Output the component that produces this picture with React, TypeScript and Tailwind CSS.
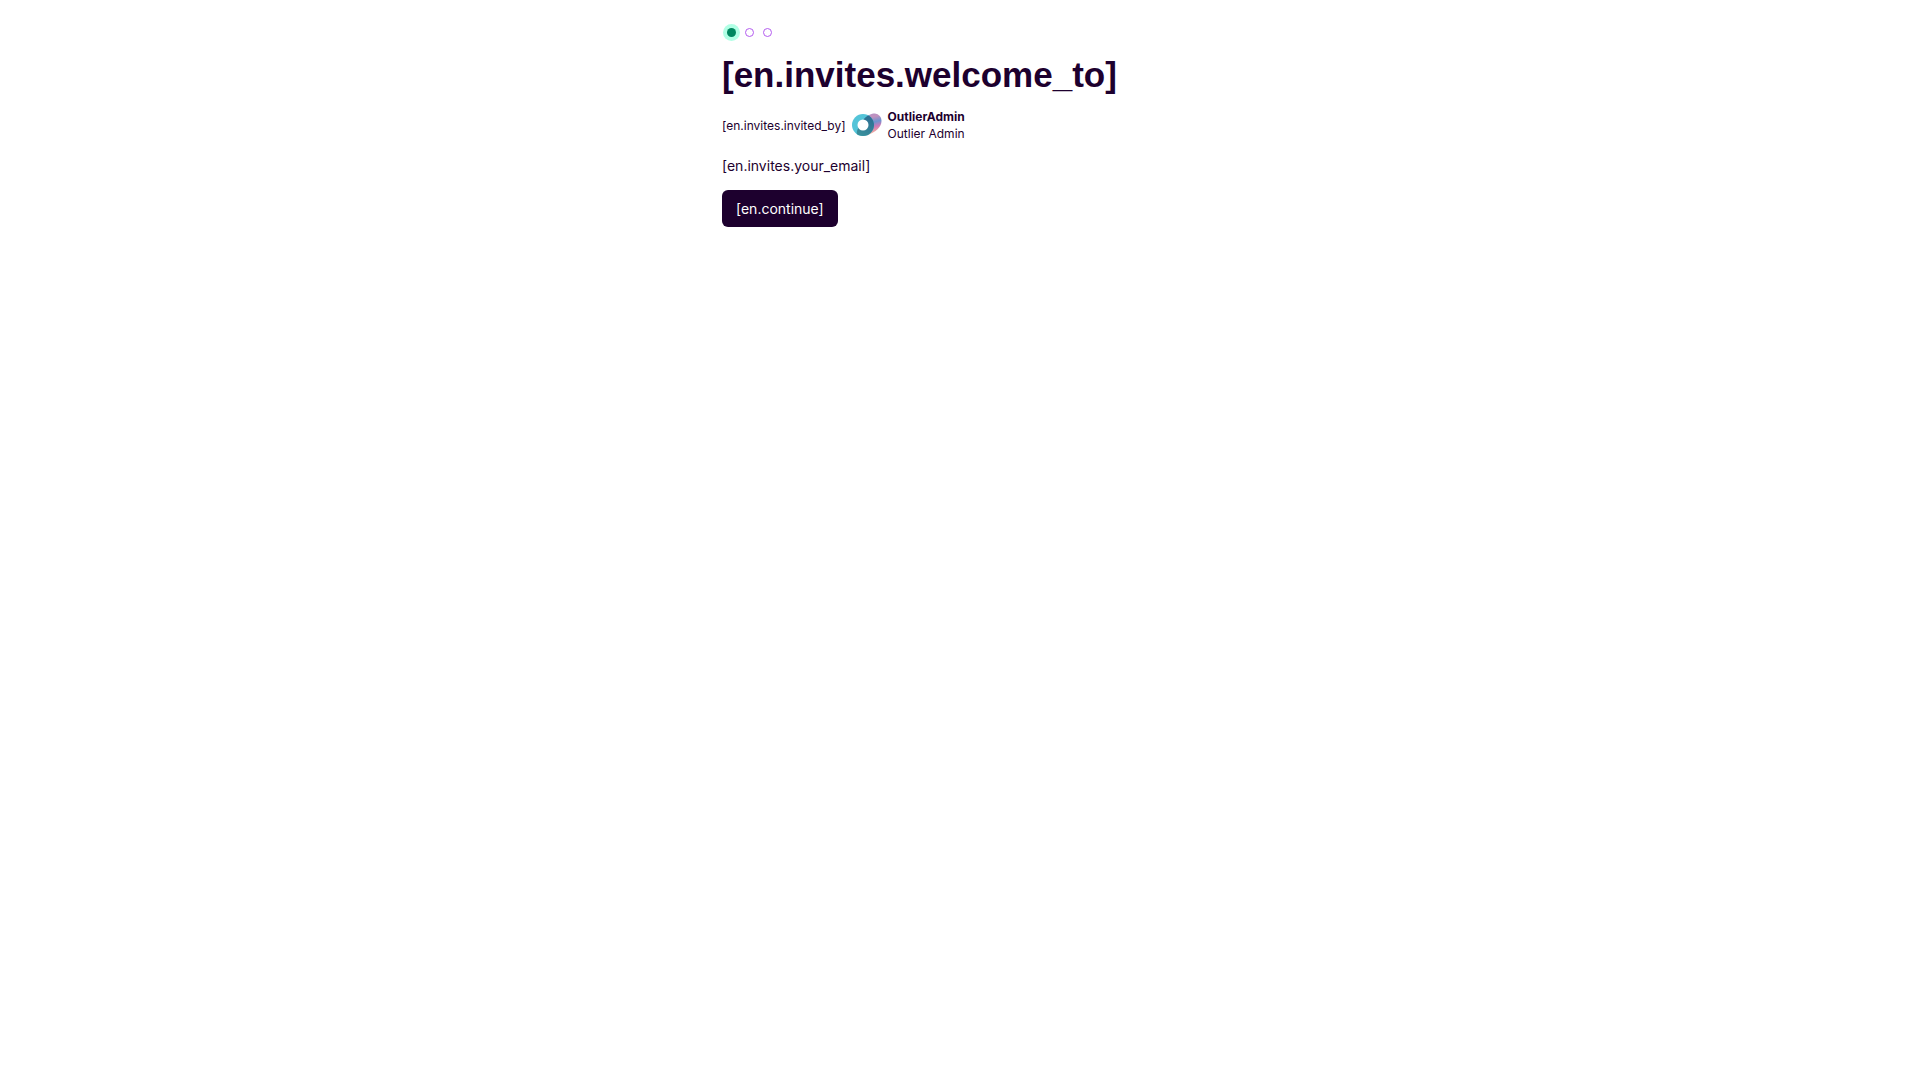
import { useState } from "react";

const steps = ["welcome", "account", "finish"];

function StepDots({ current }: { current: number }) {
  return (
    <ol className="flex h-[17px] items-center gap-[9px] pl-[5px]">
      {steps.map((step, i) => (
        <li
          key={step}
          aria-current={i === current ? "step" : undefined}
          className={
            i === current
              ? "size-[9px] rounded-full bg-[#00875f] ring-4 ring-[#b1ffe5]"
              : "size-[9px] rounded-full border border-[#b45cf0]"
          }
        />
      ))}
    </ol>
  );
}

function OutlierLogo() {
  return (
    <svg viewBox="0 0 30 30" className="size-[30px] shrink-0" aria-hidden="true">
      <defs>
        <linearGradient id="heart" x1="20" y1="4" x2="25" y2="23" gradientUnits="userSpaceOnUse">
          <stop offset="0" stopColor="#b792c4" />
          <stop offset="0.15" stopColor="#c391bd" />
          <stop offset="0.42" stopColor="#6d93d0" />
          <stop offset="0.66" stopColor="#cf79b7" />
          <stop offset="1" stopColor="#f5ba9c" />
        </linearGradient>
        <linearGradient id="shade" x1="20" y1="5" x2="9" y2="25" gradientUnits="userSpaceOnUse">
          <stop offset="0" stopColor="#2b6a92" />
          <stop offset="1" stopColor="#398f9c" />
        </linearGradient>
        <clipPath id="ring">
          <circle cx="11" cy="15" r="11" />
        </clipPath>
      </defs>
      <path
        d="M13 9 C16 5 19 3.5 23 3.5 A7 7 0 0 1 29.5 11 C29.5 17 24 22 15 25.5 Z"
        fill="url(#heart)"
      />
      <circle cx="11" cy="15" r="11" fill="#54c4d8" />
      <path
        clipPath="url(#ring)"
        d="M11.5 9.5 C13.5 7 15.5 5.5 18.5 4.5 L25 8 V22 L15 28 H6.5 C4 25 4 20 7.5 17 Z"
        fill="url(#shade)"
      />
      <circle cx="11" cy="15" r="5.5" fill="#fff" />
    </svg>
  );
}

export default function InviteWelcome() {
  const [step, setStep] = useState(0);

  return (
    <main className="mx-auto w-full max-w-[476px] bg-white pt-6 font-['Inter',sans-serif] text-[#1d002e]">
      <StepDots current={step} />

      <h1 className="mt-[14px] font-['Liberation_Sans',sans-serif] text-[35px] leading-10 font-bold">
        [en.invites.welcome_to]
      </h1>

      <div className="mt-[13px] flex items-center gap-[6px] text-xs leading-[17px]">
        <span>[en.invites.invited_by]</span>
        <OutlierLogo />
        <div>
          <p className="font-bold">OutlierAdmin</p>
          <p>Outlier Admin</p>
        </div>
      </div>

      <p className="mt-[14px] text-sm">[en.invites.your_email]</p>

      <button
        type="button"
        onClick={() => setStep((s) => Math.min(s + 1, steps.length - 1))}
        className="mt-[14px] rounded-md bg-[#1d002e] px-[14px] py-2 text-sm leading-[21px] text-white"
      >
        [en.continue]
      </button>
    </main>
  );
}
